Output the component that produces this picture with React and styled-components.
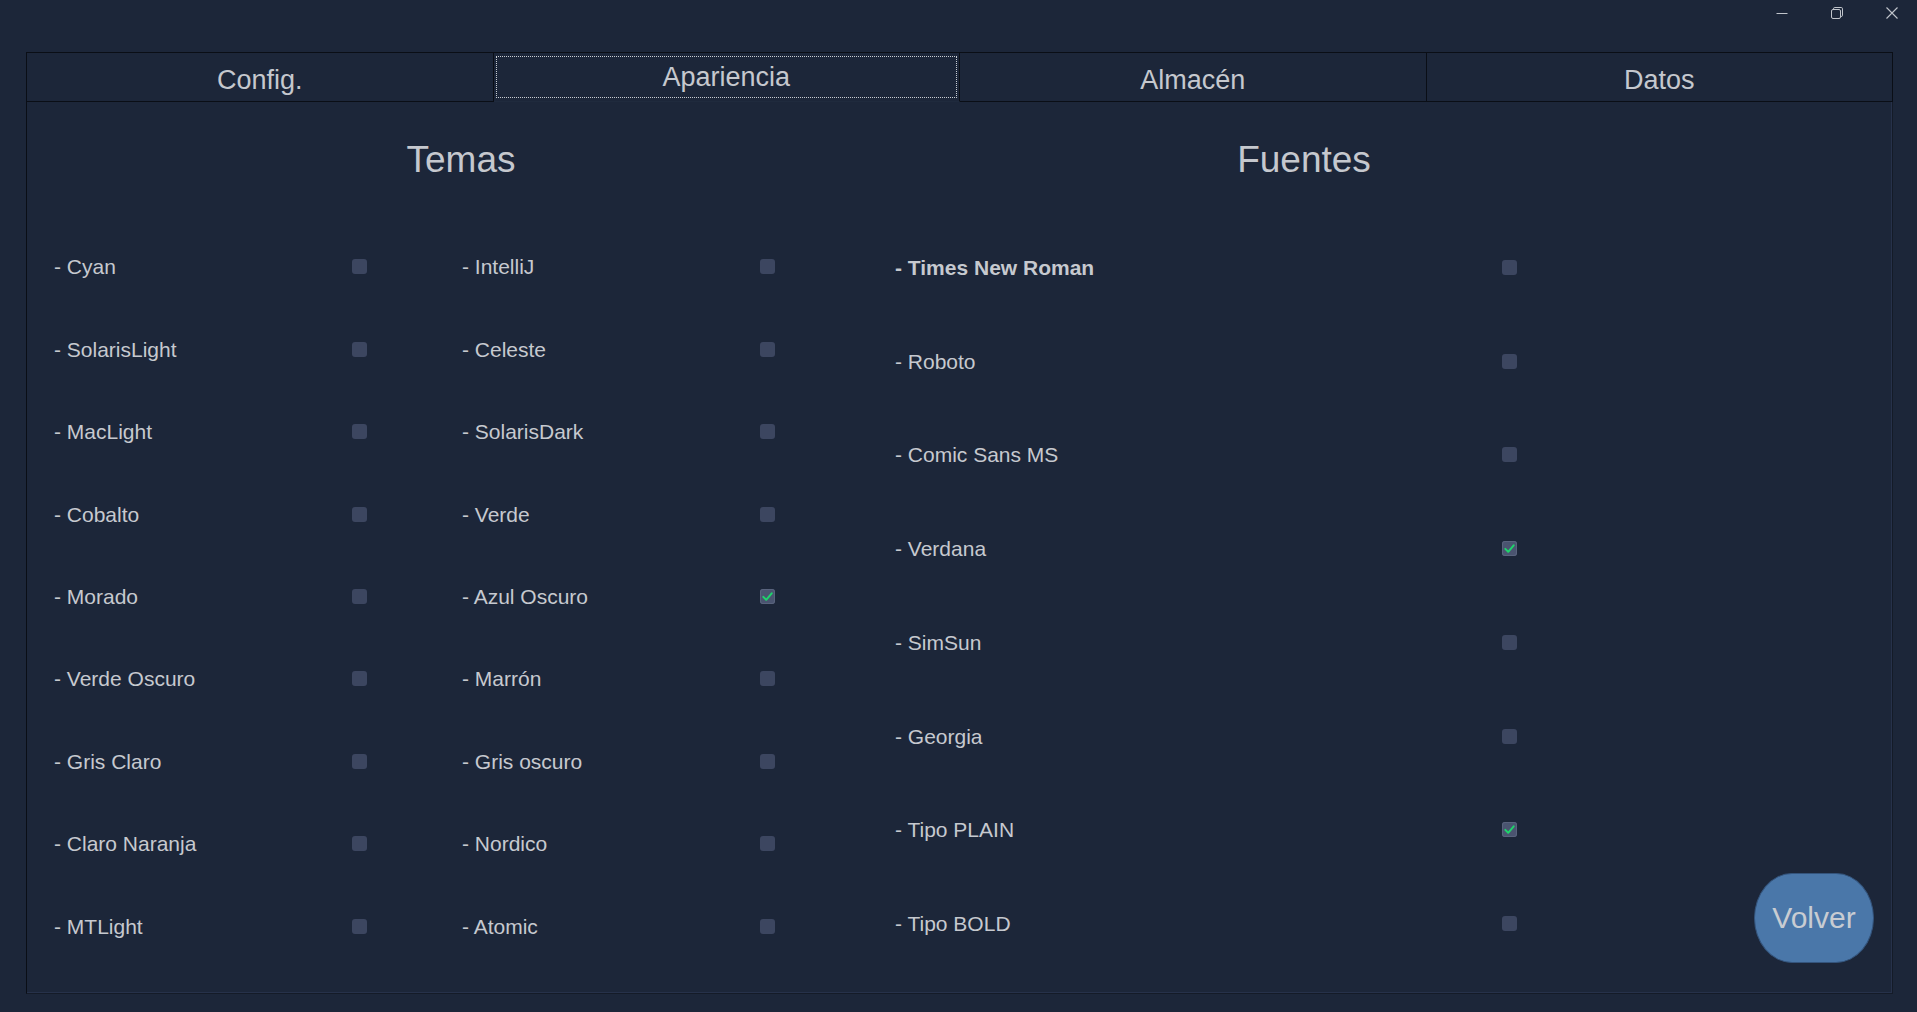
import React, { useState } from 'react';
import styled, { createGlobalStyle } from 'styled-components';

const GlobalStyle = createGlobalStyle`
  html, body {
    margin: 0;
    padding: 0;
    background-color: #1c2639;
    overflow: hidden;
  }
  * {
    box-sizing: border-box;
  }
`;

const Window = styled.div`
  width: 1917px;
  height: 1012px;
  background-color: #1c2639;
  color: #c5c8ce;
  font-family: "Liberation Sans", Arial, sans-serif;
  display: flex;
  flex-direction: column;
`;

const TitleBar = styled.div`
  height: 52px;
  display: flex;
  justify-content: flex-end;
  align-items: flex-start;
  gap: 43px;
  padding: 7px 19px 0 0;
`;

const WinButton = styled.div`
  width: 12px;
  height: 12px;
  display: flex;
  color: #c0c4cb;
`;

const Body = styled.div`
  margin: 0 24px 0 26px;
  display: flex;
  flex-direction: column;
`;

const TabBar = styled.div`
  display: flex;
  height: 50px;
`;

const Tab = styled.div`
  flex: 1;
  position: relative;
  display: flex;
  align-items: center;
  justify-content: center;
  font-size: 27px;
  color: #c5c8ce;
  border: 1px solid #0a0e16;
  border-left-width: ${(p) => (p.$first ? '1px' : '0')};
  border-bottom-color: ${(p) => (p.$active ? '#1f2a3d' : '#0a0e16')};
  padding-top: ${(p) => (p.$active ? '0' : '6px')};
  cursor: pointer;
`;

const FocusRing = styled.div`
  position: absolute;
  inset: 3px 2px 3px 2px;
  border: 1px dotted #c8ccd2;
  pointer-events: none;
`;

const Panel = styled.div`
  height: 892px;
  display: flex;
  border-left: 1px solid #0a0e16;
  border-right: 1px solid #141b28;
  border-bottom: 1px solid #141b28;
  box-shadow: inset -1px -1px 0 #26314a;
`;

const Section = styled.div`
  width: ${(p) => p.$width}px;
  display: flex;
  flex-direction: column;
`;

const Heading = styled.h2`
  margin: 37px 0 0;
  height: 42px;
  font-size: 37px;
  line-height: 42px;
  font-weight: normal;
  text-align: center;
  color: #c5c8ce;
`;

const List = styled.div`
  margin-top: ${(p) => p.$top}px;
  height: ${(p) => p.$height}px;
  padding-left: ${(p) => p.$indent}px;
  display: grid;
  grid-auto-flow: column;
  grid-template-rows: repeat(${(p) => p.$rows}, 1fr);
  grid-template-columns: ${(p) => p.$cols};
`;

const Item = styled.label`
  display: flex;
  align-items: center;
  cursor: pointer;
`;

const Label = styled.span`
  width: ${(p) => p.$width}px;
  font-size: 21px;
  font-weight: ${(p) => (p.$bold ? 'bold' : 'normal')};
  color: #c6c9cf;
  white-space: nowrap;
`;

const Box = styled.span`
  width: 15px;
  height: 15px;
  border-radius: 3px;
  margin-top: -1px;
  display: flex;
  align-items: center;
  justify-content: center;
  background-color: ${(p) => (p.$checked ? '#4a5470' : '#3c4660')};
  box-shadow: ${(p) => (p.$checked ? 'inset 0 0 0 1px #59637d' : 'none')};
`;

const Corner = styled.div`
  flex: 1;
  display: flex;
  justify-content: flex-end;
  align-items: flex-end;
  padding: 0 18px 30px 0;
`;

const VolverButton = styled.button`
  width: 120px;
  height: 90px;
  border-radius: 38px / 45px;
  border: 1px solid #34547c;
  background-color: #4a77a9;
  color: #c8ccd2;
  font-family: "Liberation Sans", Arial, sans-serif;
  font-size: 30px;
  padding: 0;
  cursor: pointer;
`;

const Check = ({ checked }) => (
  <Box $checked={checked}>
    {checked && (
      <svg width="13" height="13" viewBox="0 0 13 13">
        <path d="M2.3 6.9 L5.2 9.8 L10.7 3.3" fill="none" stroke="#1fd46c" strokeWidth="2" strokeLinecap="round" strokeLinejoin="round" />
      </svg>
    )}
  </Box>
);

const themes = [
  'Cyan', 'SolarisLight', 'MacLight', 'Cobalto', 'Morado', 'Verde Oscuro', 'Gris Claro', 'Claro Naranja', 'MTLight',
  'IntelliJ', 'Celeste', 'SolarisDark', 'Verde', 'Azul Oscuro', 'Marrón', 'Gris oscuro', 'Nordico', 'Atomic',
];

const fonts = [
  { name: 'Times New Roman', bold: true },
  { name: 'Roboto' },
  { name: 'Comic Sans MS' },
  { name: 'Verdana', checked: true },
  { name: 'SimSun' },
  { name: 'Georgia' },
  { name: 'Tipo PLAIN', checked: true },
  { name: 'Tipo BOLD' },
];

const tabs = ['Config.', 'Apariencia', 'Almacén', 'Datos'];

export default function App() {
  const [tab, setTab] = useState(1);
  const [theme, setTheme] = useState('Azul Oscuro');

  return (
    <>
      <GlobalStyle />
      <Window>
        <TitleBar>
          <WinButton>
            <svg width="12" height="12" viewBox="0 0 12 12">
              <path d="M0.5 6.5 H11.5" stroke="currentColor" strokeWidth="1" />
            </svg>
          </WinButton>
          <WinButton>
            <svg width="12" height="12" viewBox="0 0 12 12" fill="none" stroke="currentColor" strokeWidth="1">
              <rect x="0.5" y="2.5" width="9" height="9" rx="1.5" />
              <path d="M2.5 2.5 V1.8 A1.3 1.3 0 0 1 3.8 0.5 H10.2 A1.3 1.3 0 0 1 11.5 1.8 V8.2 A1.3 1.3 0 0 1 10.2 9.5 H9.5" />
            </svg>
          </WinButton>
          <WinButton>
            <svg width="12" height="12" viewBox="0 0 12 12">
              <path d="M0.5 0.5 L11.5 11.5 M11.5 0.5 L0.5 11.5" stroke="currentColor" strokeWidth="1.1" />
            </svg>
          </WinButton>
        </TitleBar>

        <Body>
          <TabBar>
            {tabs.map((t, i) => (
              <Tab key={t} $first={i === 0} $active={i === tab} onClick={() => setTab(i)}>
                {t}
                {i === tab && <FocusRing />}
              </Tab>
            ))}
          </TabBar>

          <Panel>
            <Section $width={868}>
              <Heading>Temas</Heading>
              <List $top={45} $height={742} $indent={27} $rows={9} $cols="408px 408px">
                {themes.map((name) => (
                  <Item key={name} onClick={() => setTheme(name)}>
                    <Label $width={298}>- {name}</Label>
                    <Check checked={theme === name} />
                  </Item>
                ))}
              </List>
            </Section>

            <Section $width={818}>
              <Heading>Fuentes</Heading>
              <List $top={40} $height={750} $indent={0} $rows={8} $cols="1fr">
                {fonts.map((f) => (
                  <Item key={f.name}>
                    <Label $width={607} $bold={f.bold}>- {f.name}</Label>
                    <Check checked={!!f.checked} />
                  </Item>
                ))}
              </List>
            </Section>

            <Corner>
              <VolverButton>Volver</VolverButton>
            </Corner>
          </Panel>
        </Body>
      </Window>
    </>
  );
}
